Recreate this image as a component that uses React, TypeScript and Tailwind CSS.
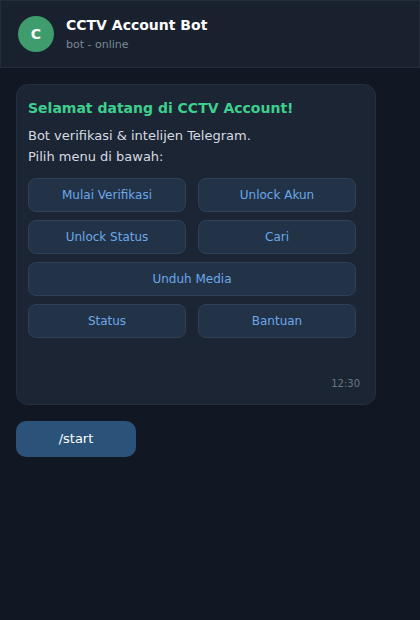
const buttons: { label: string; full?: boolean }[] = [
	{ label: 'Mulai Verifikasi' },
	{ label: 'Unlock Akun' },
	{ label: 'Unlock Status' },
	{ label: 'Cari' },
	{ label: 'Unduh Media', full: true },
	{ label: 'Status' },
	{ label: 'Bantuan' },
];

export default function App() {
	return (
		<div className="min-h-[620px] w-full bg-[#111823] font-['DejaVu_Sans',sans-serif]">
			{/* header */}
			<div className="flex h-[68px] items-center gap-3 border border-[#232c39] bg-[#18212d] px-[17px]">
				<div className="flex h-9 w-9 items-center justify-center rounded-full bg-[#3e9c6d] text-sm font-bold text-white">C</div>
				<div className="flex flex-col">
					<div className="text-sm font-bold leading-5 text-white">CCTV Account Bot</div>
					<div className="mt-0.5 text-[11px] leading-4 text-[#7b8797]">bot - online</div>
				</div>
			</div>

			<div className="flex flex-col items-start gap-4 px-4 pt-4">
				{/* message card */}
				<div className="w-[360px] rounded-xl border border-[#243040] bg-[#1b2533] pb-3 pl-[11px] pr-3 pt-[11px]">
					<div className="text-sm font-bold leading-6 text-[#3ecf8e]">Selamat datang di CCTV Account!</div>
					<div className="mt-[5px] text-[13px] leading-[21px] text-[#d6dbe2]">
						Bot verifikasi &amp; intelijen Telegram.
						<br />
						Pilih menu di bawah:
					</div>
					<div className="mt-[11px] grid w-[328px] grid-cols-2 gap-x-3 gap-y-2">
						{buttons.map((b) => (
							<div
								key={b.label}
								className={`flex h-[34px] items-center justify-center rounded-lg border border-[#304056] bg-[#233347] text-xs text-[#6aa8ea] ${b.full ? 'col-span-2' : ''}`}>
								{b.label}
							</div>
						))}
					</div>
					<div className="mr-[3px] mt-[38px] text-right text-[10px] leading-4 text-[#6b7686]">12:30</div>
				</div>

				{/* sent command */}
				<div className="flex h-9 w-[120px] items-center justify-center rounded-[10px] bg-[#2b5278] text-[13px] text-white">/start</div>
			</div>
		</div>
	);
}
